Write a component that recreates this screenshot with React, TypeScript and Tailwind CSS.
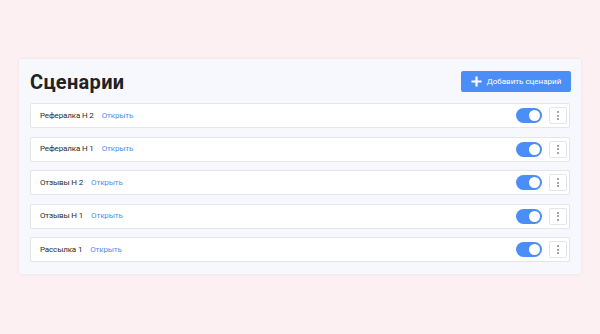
import React from 'react';

interface Scenario {
  name: string;
  enabled: boolean;
}

const scenarios: Scenario[] = [
  { name: 'Рефералка Н 2', enabled: true },
  { name: 'Рефералка Н 1', enabled: true },
  { name: 'Отзывы Н 2', enabled: true },
  { name: 'Отзывы Н 1', enabled: true },
  { name: 'Рассылка 1', enabled: true },
];

const Toggle: React.FC<{ on: boolean }> = ({ on }) => (
  <div className={`w-[26px] h-[15px] rounded-full flex items-center px-[2px] ${on ? 'bg-[#4c8ef7] justify-end' : 'bg-slate-300 justify-start'}`}>
    <div className="w-[11px] h-[11px] rounded-full bg-white"></div>
  </div>
);

const ScenarioRow: React.FC<{ item: Scenario }> = ({ item }) => (
  <div className="h-[25px] bg-white border border-[#e4e6ec] rounded-[2px] flex items-center justify-between pl-[9px] pr-[2px]">
    <div className="flex items-center gap-[8px] text-[8px] tracking-[-0.15px]">
      <span className="text-[#2b2b2b]">{item.name}</span>
      <a className="text-[#4c8ef7] cursor-pointer">Открыть</a>
    </div>
    <div className="flex items-center gap-[7px]">
      <Toggle on={item.enabled} />
      <button className="w-[18px] h-[17px] border border-[#e4e6ec] rounded-[2px] bg-white flex flex-col items-center justify-center gap-[1.5px]">
        <span className="w-[2px] h-[2px] rounded-full bg-[#888]"></span>
        <span className="w-[2px] h-[2px] rounded-full bg-[#888]"></span>
        <span className="w-[2px] h-[2px] rounded-full bg-[#888]"></span>
      </button>
    </div>
  </div>
);

export default function App() {
  return (
    <div className="w-[600px] h-[334px] bg-[#fdf0f3] pt-[59px] px-[19px] font-['Roboto',sans-serif]">
      <div className="bg-[#f7f8fd] shadow-[0_0_3px_rgba(0,0,0,0.08)] pt-[12px] pb-[12px] px-[11px]">
        <div className="h-[21px] flex items-center justify-between mb-[11px]">
          <h1 className="text-[20px] font-bold text-[#222] leading-[21px] mt-[2px] tracking-[0.3px]">Сценарии</h1>
          <button className="w-[110px] h-[21px] bg-[#4c8ef7] rounded-[2px] text-white text-[8px] flex items-center justify-center gap-[5px] mr-[-1px]">
            <svg width="11" height="11" viewBox="0 0 11 11">
              <path d="M5.5 0.5v10M0.5 5.5h10" stroke="white" strokeWidth="2.2" />
            </svg>
            Добавить сценарий
          </button>
        </div>
        <div className="flex flex-col gap-[8.5px]">
          {scenarios.map((s) => (
            <ScenarioRow key={s.name} item={s} />
          ))}
        </div>
      </div>
    </div>
  );
}
